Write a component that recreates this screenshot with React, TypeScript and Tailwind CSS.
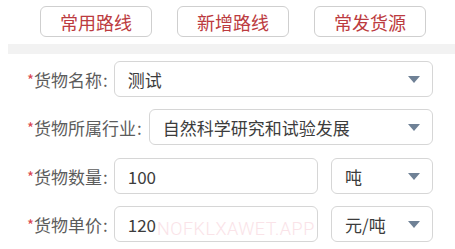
import React from "react";

const cjk = { fontFamily: '"Noto Sans CJK SC", "Noto Sans", sans-serif' };

function Caret() {
    return (
        <svg width="12" height="7" viewBox="0 0 12 7" className="shrink-0">
            <path d="M0 0 L12 0 L6 7 Z" fill="#6f8196" />
        </svg>
    );
}

function Label({ text }: { text: string }) {
    return (
        <div className="flex items-center shrink-0 text-[17px] text-[#5c5c5c] leading-none">
            <span className="text-[#d9454f] text-[15px] mt-[1px]">*</span>
            <span>{text}</span>
            <span className="ml-[1px]">:</span>
        </div>
    );
}

function Select({ value, className }: { value: string; className?: string }) {
    return (
        <div
            className={`h-[36px] flex items-center justify-between pl-[13px] pr-[12px] border border-[#d6d6d6] rounded-[6px] bg-white ${className ?? ""}`}
        >
            <span className="text-[17px] text-[#3c3c3c] leading-none">{value}</span>
            <Caret />
        </div>
    );
}

function Input({ value }: { value: string }) {
    return (
        <div className="h-[36px] flex-1 flex items-center pl-[13px] border border-[#d6d6d6] rounded-[6px] bg-white">
            <span className="text-[17px] text-[#3c3c3c] leading-none">{value}</span>
        </div>
    );
}

export default function App() {
    const buttons = ["常用路线", "新增路线", "常发货源"];

    return (
        <div className="relative w-[455px] h-[249px] bg-white overflow-hidden" style={cjk}>
            <div className="flex gap-[25px] pl-[40px] pt-[6px]">
                {buttons.map((b) => (
                    <button
                        key={b}
                        className="w-[112px] h-[31px] border border-[#cfcfcf] rounded-[6px] text-[18px] text-[#bc3b40] leading-none flex items-center justify-center"
                    >
                        {b}
                    </button>
                ))}
            </div>

            <div className="ml-2 mt-[7px] h-[10px] bg-[#f2f2f2]" />

            <div className="pl-[27px] pr-[22px] mt-[7px]">
                <div className="flex items-center gap-[6px]">
                    <Label text="货物名称" />
                    <Select value="测试" className="flex-1" />
                </div>
                <div className="flex items-center gap-[7px] mt-[12px]">
                    <Label text="货物所属行业" />
                    <Select value="自然科学研究和试验发展" className="flex-1" />
                </div>
                <div className="flex items-center gap-[6px] mt-[13px]">
                    <Label text="货物数量" />
                    <Input value="100" />
                    <Select value="吨" className="w-[102px] ml-[7px]" />
                </div>
                <div className="flex items-center gap-[6px] mt-[12px]">
                    <Label text="货物单价" />
                    <Input value="120" />
                    <Select value="元/吨" className="w-[102px] ml-[7px]" />
                </div>
            </div>

            <div
                className="absolute left-[157px] top-[215px] text-[18px] tracking-[0.5px] text-[#fae3e8] pointer-events-none"
                style={{ fontFamily: '"Roboto", sans-serif', fontWeight: 300 }}
            >
                NOFKLXAWET.APP
            </div>
        </div>
    );
}
